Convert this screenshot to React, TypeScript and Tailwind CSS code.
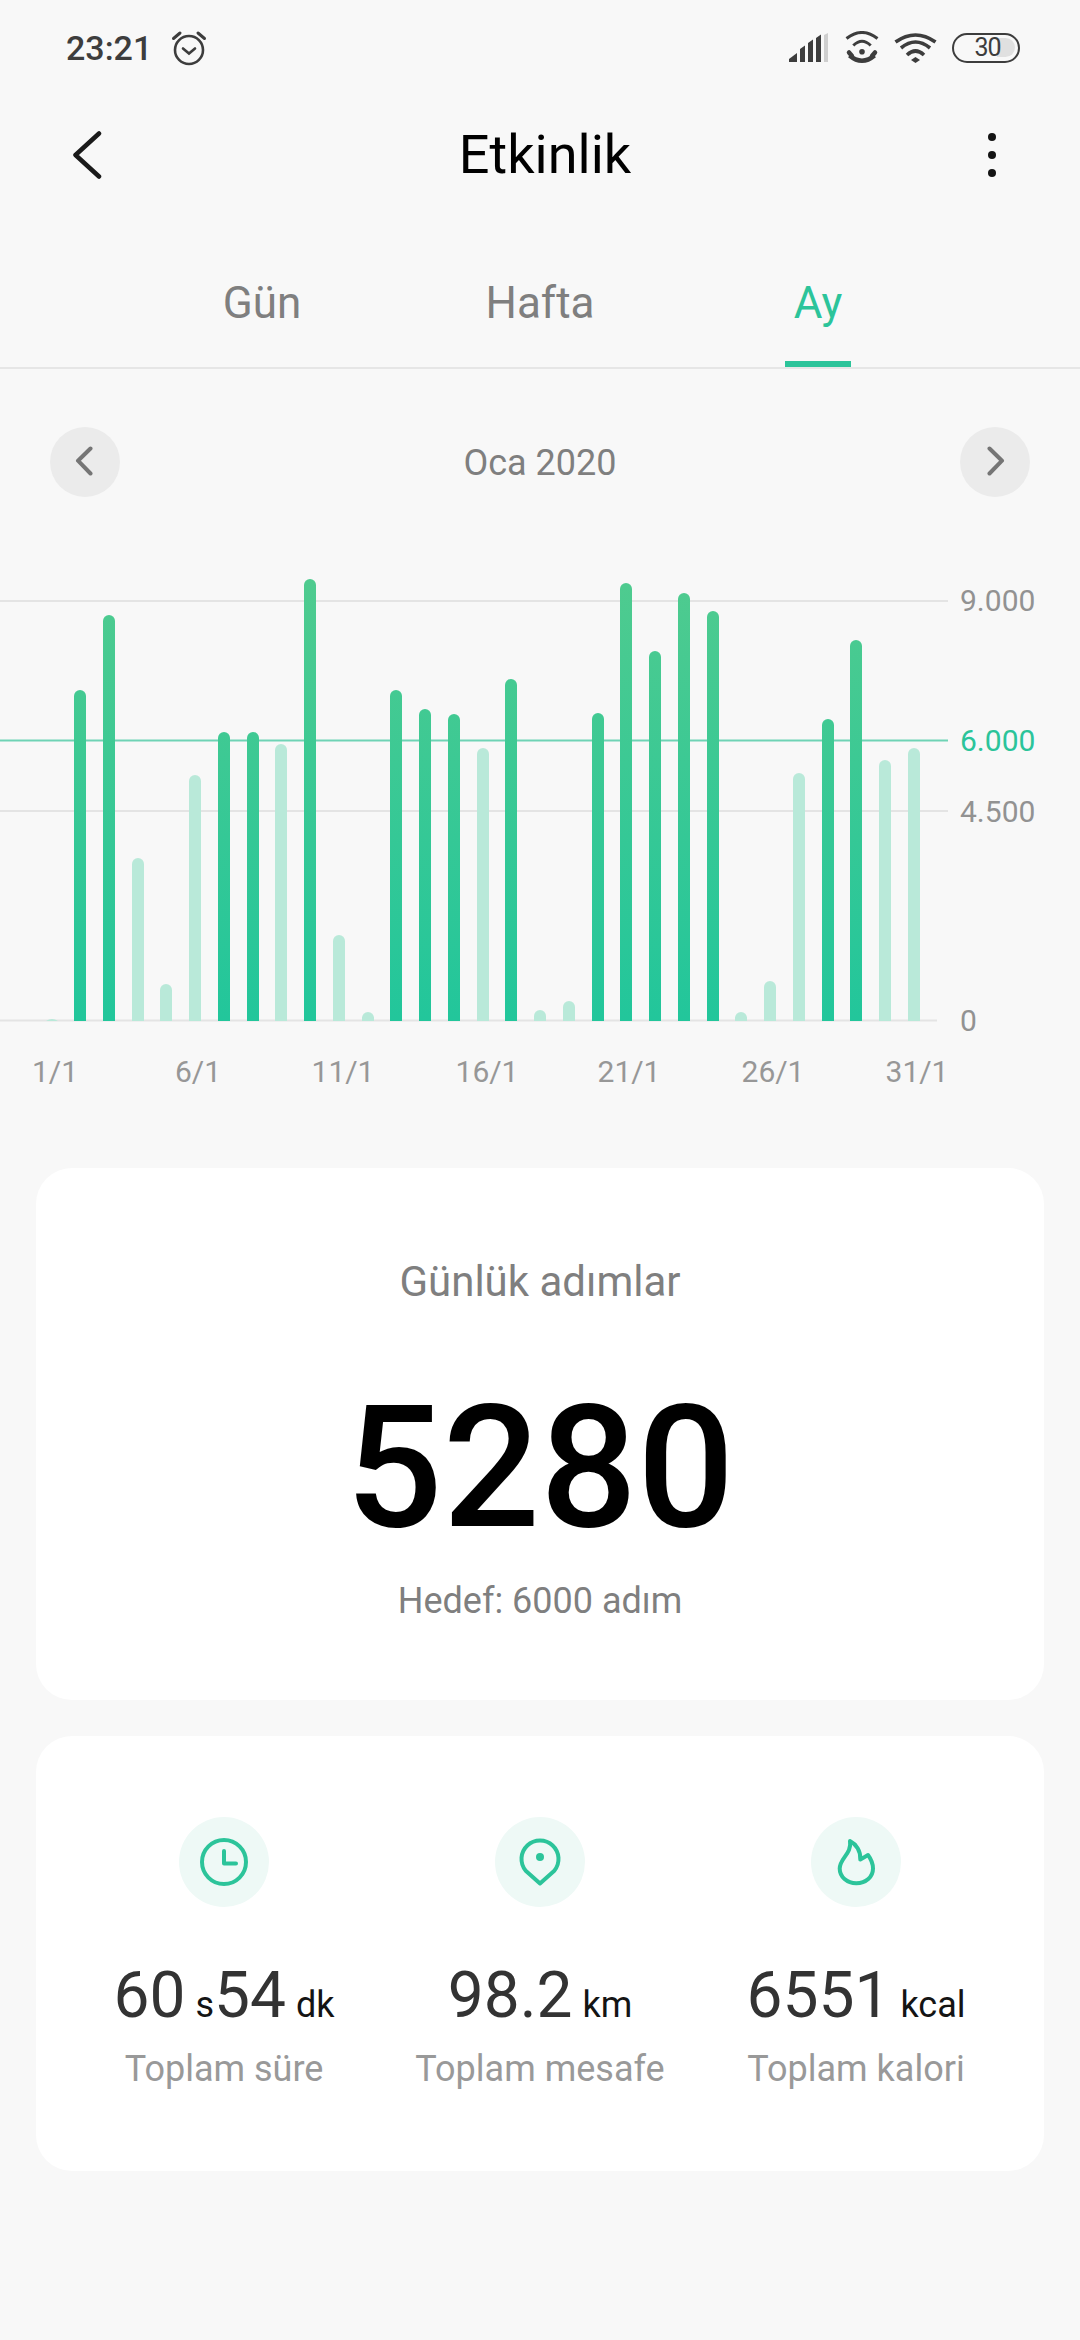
import { Fragment } from "react";

const BAR_LEFT = [46, 74, 103, 132, 160, 189, 218, 247, 275, 304, 333, 362, 390, 419, 448, 477, 505, 534, 563, 592, 620, 649, 678, 707, 735, 764, 793, 822, 850, 879, 908];
const BAR_TOP = [1019, 690, 615, 858, 984, 775, 732, 732, 744, 579, 935, 1012, 690, 709, 714, 748, 679, 1010, 1001, 713, 583, 651, 593, 611, 1012, 981, 773, 719, 640, 760, 748];
// goal reached days get the strong green
const REACHED = [2, 3, 7, 8, 10, 13, 14, 15, 17, 20, 21, 22, 23, 24, 28, 29];

const CHART_TOP = 560;
const BASE = 1021;

function barPath(left: number, top: number) {
  const r = 6;
  const t = top - CHART_TOP;
  const b = BASE - CHART_TOP;
  if (b - t < r) {
    return `M${left} ${b}Q${left + r} ${t - (b - t)} ${left + 12} ${b}Z`;
  }
  return `M${left} ${b}V${t + r}A${r} ${r} 0 0 1 ${left + 12} ${t + r}V${b}Z`;
}

function Chart() {
  return (
    <svg width="1080" height="540" viewBox="0 0 1080 540" className="block" style={{ fontFamily: "Roboto, sans-serif" }}>
      <defs>
        <linearGradient id="barFill" gradientUnits="userSpaceOnUse" x1="0" y1="19" x2="0" y2="461">
          <stop offset="0" stopColor="#4fcb8f" />
          <stop offset="1" stopColor="#22c69b" />
        </linearGradient>
      </defs>
      <line x1="0" x2="948" y1="41" y2="41" stroke="#e4e4e4" strokeWidth="2" />
      <line x1="0" x2="948" y1="251" y2="251" stroke="#e4e4e4" strokeWidth="2" />
      <line x1="0" x2="937" y1="460.5" y2="460.5" stroke="#e4e4e4" strokeWidth="2" />
      <line x1="0" x2="948" y1="180.5" y2="180.5" stroke="#6fd3b5" strokeWidth="2" />
      {BAR_LEFT.map((left, i) => (
        <path key={left} d={barPath(left, BAR_TOP[i])} fill={REACHED.includes(i + 1) ? "url(#barFill)" : "#b9e9d9"} />
      ))}
      <text x="960" y="51" fontSize="30" fill="#929292">9.000</text>
      <text x="960" y="191" fontSize="30" fill="#2bc49a">6.000</text>
      <text x="960" y="261.500" fontSize="30" fill="#929292">4.500</text>
      <text x="960" y="471" fontSize="30" fill="#929292">0</text>
      {[
        ["1/1", 55],
        ["6/1", 198],
        ["11/1", 343],
        ["16/1", 487],
        ["21/1", 629],
        ["26/1", 773],
        ["31/1", 917],
      ].map(([label, x]) => (
        <text key={label} x={x} y="522" fontSize="30" fill="#979797" textAnchor="middle">{label}</text>
      ))}
    </svg>
  );
}

function StatusBar() {
  return (
    <div className="h-[95px] pl-[66px] pr-[60px] flex items-center justify-between text-[#3d3d3d]">
      <div className="flex items-center gap-[19px]">
        <span className="text-[34px] font-medium leading-none">23:21</span>
        <svg width="36" height="36" viewBox="0 0 36 36" fill="none" stroke="currentColor" strokeWidth="2.600" strokeLinecap="round">
          <circle cx="18" cy="20" r="14" />
          <path d="M12 18.500l6 5 6-5" />
          <path d="M2.500 8.500L9 3M33.500 8.500L27 3" strokeWidth="3" />
        </svg>
      </div>
      <div className="flex items-center">
        <svg width="40" height="30" viewBox="0 0 40 30" fill="currentColor">
          <path d="M0 29v-3l8-6v9z" />
          <path d="M11 29V16l5-3.500V29zM19 29V10l5-3.500V29zM27 29V5l5-3.500V29z" />
          <path d="M35 29V2l4-2v29z" fill="#cfcfcf" />
        </svg>
        <svg className="ml-[16px]" width="34" height="33" viewBox="0 0 34 33" fill="none" stroke="currentColor" strokeWidth="3">
          <path d="M1.500 7.500Q17 -4.500 32.500 7.500" />
          <path d="M8.300 14.500Q17 6 25.700 14.500" />
          <circle cx="17" cy="20.700" r="2.800" fill="currentColor" stroke="none" />
          <path d="M4.500 24.500Q17 35 29.500 24.500" strokeWidth="4.500" />
          <path d="M4 21.500l3 3.500M30 21.500l-3 3.500" strokeWidth="4.500" strokeLinecap="round" />
        </svg>
        <svg className="ml-[15px]" width="43" height="31" viewBox="0 0 43 31" fill="none" stroke="currentColor" strokeWidth="3.600">
          <path d="M1.500 10Q21.500 -4 41.500 10" />
          <path d="M7 16Q21.500 4 36 16" />
          <path d="M13 23Q21.500 15 30 23" />
          <path d="M21.500 25l4.500 3-4.500 3-4.500-3z" fill="currentColor" stroke="none" />
        </svg>
        <div className="ml-[15px] relative w-[68px] h-[30px] rounded-full border-[2.500px] border-[#3d3d3d]">
          <div className="absolute right-[3px] top-[3.500px] bottom-[3.500px] w-[18px] rounded-r-full bg-[#e0e0e0]" />
          <span className="absolute inset-0 pl-[3px] flex items-center justify-center text-[25px] tracking-[-1px] leading-none">30</span>
        </div>
      </div>
    </div>
  );
}

function TopBar() {
  return (
    <div className="h-[120px] pl-[72px] pr-[84px] flex items-center justify-between text-[#141414]">
      <svg width="30" height="48" viewBox="0 0 30 48" fill="none" stroke="#1a1a1a" strokeWidth="4.500" strokeLinecap="round" strokeLinejoin="round">
        <path d="M27 2.500L3.500 24 27 45.500" />
      </svg>
      <h1 className="text-[54px] font-normal leading-none text-black">Etkinlik</h1>
      <div className="flex flex-col gap-[10px]">
        <span className="w-[8px] h-[8px] rounded-full bg-[#141414]" />
        <span className="w-[8px] h-[8px] rounded-full bg-[#141414]" />
        <span className="w-[8px] h-[8px] rounded-full bg-[#141414]" />
      </div>
    </div>
  );
}

function Tabs() {
  return (
    <div className="mt-[39px] h-[115px] border-b-2 border-[#e6e6e6] px-[123px] grid grid-cols-3">
      <div className="flex justify-center text-[44px] leading-[52px] pt-[23px] text-[#7f7f7f]">Gün</div>
      <div className="flex justify-center text-[44px] leading-[52px] pt-[23px] text-[#7f7f7f]">Hafta</div>
      <div className="flex flex-col items-center text-[44px] leading-[52px] pt-[23px] text-[#2cc49a]">
        Ay
        <div className="mt-auto w-[66px] h-[6px] bg-[#2cc49a]" />
      </div>
    </div>
  );
}

function DateNav() {
  return (
    <div className="mt-[58px] px-[50px] flex items-center justify-between">
      <button className="w-[70px] h-[70px] rounded-full bg-[#ebebeb] flex items-center justify-center">
        <svg width="20" height="32" viewBox="0 0 20 32" fill="none" stroke="#757575" strokeWidth="4" strokeLinecap="round" strokeLinejoin="round">
          <path d="M15.500 2.500L3 14.700l12.500 12.800" />
        </svg>
      </button>
      <span className="pt-[2px] text-[36px] text-[#7f7f7f]">Oca 2020</span>
      <button className="w-[70px] h-[70px] rounded-full bg-[#ebebeb] flex items-center justify-center">
        <svg width="20" height="32" viewBox="0 0 20 32" fill="none" stroke="#757575" strokeWidth="4" strokeLinecap="round" strokeLinejoin="round">
          <path d="M4.500 2.500L17 14.700 4.500 27.500" />
        </svg>
      </button>
    </div>
  );
}

const STATS = [
  {
    label: "Toplam süre",
    parts: [["60", "s"], ["54", "dk"]],
    icon: (
      <>
        <circle cx="24" cy="25" r="22" />
        <path d="M24 14v12.500h12" />
      </>
    ),
  },
  {
    label: "Toplam mesafe",
    parts: [["98.2", "km"]],
    icon: (
      <>
        <path d="M24 46.500L9.700 33.700A18.500 18.500 0 1 1 38.300 33.700Z" />
        <circle cx="24" cy="20" r="4" fill="#2cc49a" stroke="none" />
      </>
    ),
  },
  {
    label: "Toplam kalori",
    parts: [["6551", "kcal"]],
    icon: (
      <path d="M18 4C24 7 29 14 28.300 22.600L36 18C39 22 41 27 41 31.600C41 40 34 46.300 24.300 46.300C15 46.300 7.700 40 7.700 31.600C7.700 21 20 17 18 4Z" />
    ),
  },
];

function StatsCard() {
  return (
    <div className="mt-[36px] mx-[36px] h-[435px] rounded-[36px] bg-white grid grid-cols-3 pt-[81px] px-[30px]">
      {STATS.map((s) => (
        <div key={s.label} className="flex flex-col items-center">
          <div className="w-[90px] h-[90px] rounded-full bg-[#eef9f6] flex items-center justify-center">
            <svg width="48" height="50" viewBox="0 0 48 50" fill="none" stroke="#2cc49a" strokeWidth="4" strokeLinecap="round" strokeLinejoin="round">
              {s.icon}
            </svg>
          </div>
          <div className="mt-[53px] h-[72px] flex items-baseline whitespace-nowrap text-[#333333]">
            {s.parts.map(([value, unit]) => (
              <Fragment key={unit}>
                <span className="text-[64px] leading-[72px]">{value}</span>
                <span className="text-[36px] leading-[72px] ml-[10px] text-[#141414]">{unit}</span>
              </Fragment>
            ))}
          </div>
          <div className="mt-[17px] text-[36px] leading-[40px] text-[#999999]">{s.label}</div>
        </div>
      ))}
    </div>
  );
}

export default function App() {
  return (
    <div className="w-[1080px] h-[2340px] overflow-hidden bg-[#f8f8f8] font-['Roboto',sans-serif]">
      <StatusBar />
      <TopBar />
      <Tabs />
      <DateNav />
      <div className="mt-[63px]">
        <Chart />
      </div>
      <div className="mt-[68px] mx-[36px] h-[532px] rounded-[36px] bg-white flex flex-col items-center pt-[90px]">
        <div className="text-[42px] leading-[48px] text-[#7f7f7f]">Günlük adımlar</div>
        <div className="mt-[69px] text-[171px] leading-[186px] font-medium text-black">5280</div>
        <div className="mt-[20px] text-[36px] leading-[40px] text-[#7f7f7f]">Hedef: 6000 adım</div>
      </div>
      <StatsCard />
    </div>
  );
}
